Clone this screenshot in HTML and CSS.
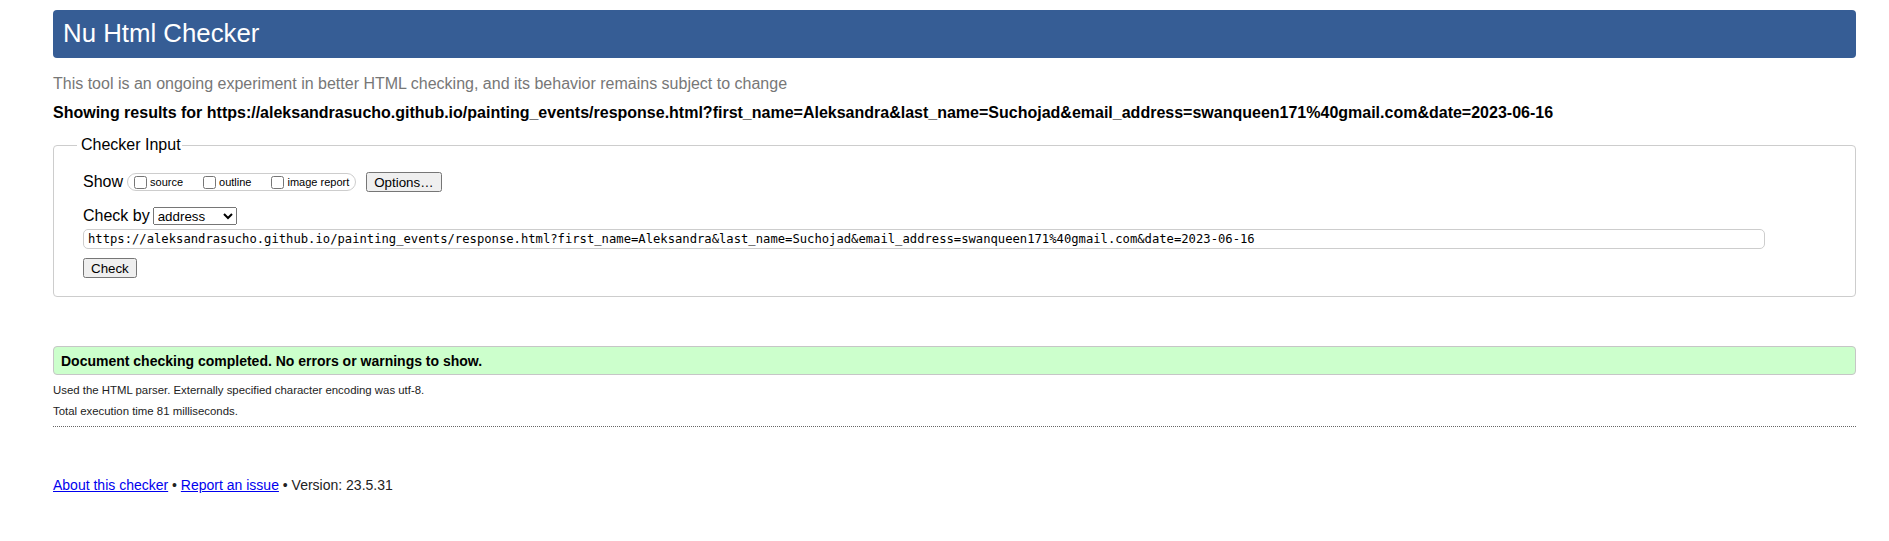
FILE: index.html
```html
<!DOCTYPE html>
<html lang="en">
<head>
<meta charset="utf-8">
<title>Showing results for https://aleksandrasucho.github.io/painting_events/response.html - Nu Html Checker</title>
<link rel="stylesheet" href="styles.css">
</head>
<body>
<h1 class="title">Nu Html Checker</h1>
<p class="desc">This tool is an ongoing experiment in better HTML checking, and its behavior remains subject to change</p>
<p class="showing">Showing results for https://aleksandrasucho.github.io/painting_events/response.html?first_name=Aleksandra&amp;last_name=Suchojad&amp;email_address=swanqueen171%40gmail.com&amp;date=2023-06-16</p>
<form class="checker">
  <fieldset class="input-set">
    <legend class="input-legend">Checker Input</legend>
    <div class="row show-row">
      <span class="label">Show</span>
      <span class="show-group">
        <label class="opt"><input type="checkbox" class="cb">source</label>
        <label class="opt"><input type="checkbox" class="cb">outline</label>
        <label class="opt last"><input type="checkbox" class="cb">image report</label>
      </span>
      <button type="button" class="btn options">Options…</button>
    </div>
    <div class="row by-row">
      <span class="label">Check by</span>
      <select class="by-select">
        <option selected>address</option>
        <option>file upload</option>
        <option>text input</option>
      </select>
    </div>
    <input type="url" class="url" value="https://aleksandrasucho.github.io/painting_events/response.html?first_name=Aleksandra&amp;last_name=Suchojad&amp;email_address=swanqueen171%40gmail.com&amp;date=2023-06-16">
    <div class="submit-row"><button type="button" class="btn check">Check</button></div>
  </fieldset>
</form>
<div class="results">
  <p class="success">Document checking completed. No errors or warnings to show.</p>
</div>
<div class="details">
  <p class="detail">Used the HTML parser. Externally specified character encoding was utf-8.</p>
  <p class="detail">Total execution time 81 milliseconds.</p>
</div>
<p class="footer"><a href="#" class="flink">About this checker</a> • <a href="#" class="flink">Report an issue</a> • Version: 23.5.31</p>
</body>
</html>
```
FILE: styles.css
```css
html {
  background: #fff;
}
body {
  margin: 0;
  padding: 10px 33px 0 53px;
  font-family: "Liberation Sans", Arial, Helvetica, sans-serif;
  font-size: 16px;
  color: #000;
}
.title {
  margin: 0;
  height: 48px;
  box-sizing: border-box;
  display: flex;
  align-items: center;
  padding: 0 0 2px 10px;
  background: #365d95;
  color: #fff;
  border-radius: 4px;
  font-size: 25.8px;
  font-weight: normal;
}
.desc {
  margin: 17px 0 0;
  line-height: 18px;
  color: #777;
}
.showing {
  margin: 11px 0 0;
  line-height: 18px;
  font-weight: bold;
}
.checker {
  margin: 14px 0 0;
}
.input-set {
  margin: 0;
  padding: 18px 29px 18px;
  border: 1px solid #cdcdcd;
  border-radius: 4px;
  min-width: 0;
}
.input-legend {
  margin-left: -6px;
  padding: 0 1px 0 4px;
  line-height: normal;
  font-size: 16px;
}
.row {
  display: flex;
  align-items: center;
}
.show-row {
  height: 20px;
}
.by-row {
  margin-top: 15px;
  height: 18px;
}
.label {
  font-size: 16px;
  white-space: nowrap;
}
.show-group {
  display: inline-flex;
  align-items: center;
  box-sizing: border-box;
  height: 18px;
  margin-left: 4px;
  padding: 0 6px 0 2px;
  border: 1px solid #cdcdcd;
  border-radius: 9px;
}
.opt {
  display: inline-flex;
  align-items: center;
  font-size: 11px;
  margin-right: 16px;
  white-space: nowrap;
}
.opt.last {
  margin-right: 0;
}
.cb {
  width: 13px;
  height: 13px;
  margin: 0 3px 0 4px;
}
.btn {
  box-sizing: border-box;
  height: 20px;
  padding: 0 6px;
  font-family: "Liberation Sans", Arial, sans-serif;
  font-size: 13.33px;
  color: #000;
}
.options {
  margin-left: 10px;
}
.by-select {
  box-sizing: border-box;
  width: 84px;
  height: 18px;
  margin-left: 3px;
  font-family: "Liberation Sans", Arial, sans-serif;
  font-size: 13.33px;
  color: #000;
}
.url {
  display: block;
  box-sizing: border-box;
  width: 1682px;
  height: 20px;
  margin: 4px 0 0;
  padding: 0 4px;
  border: 1px solid #cdcdcd;
  border-radius: 5px;
  font-family: "DejaVu Sans Mono", "Liberation Mono", monospace;
  font-size: 12.2px;
  color: #000;
  outline: none;
}
.submit-row {
  margin-top: 9px;
  height: 20px;
}
.results {
  margin-top: 49px;
}
.success {
  margin: 0;
  padding: 6px 7px 5px;
  line-height: 16px;
  font-size: 14px;
  font-weight: bold;
  background: #ccffcc;
  border: 1px solid #c6c6c6;
  border-radius: 4px;
}
.details {
  margin-top: 5px;
  padding-bottom: 4px;
  border-bottom: 1px dotted #666;
}
.detail {
  margin: 0;
  line-height: 21px;
  font-size: 11.4px;
  color: #222;
}
.footer {
  margin: 50px 0 0;
  line-height: 16px;
  font-size: 14px;
  color: #222;
}
.flink {
  color: #0000ee;
}
```
